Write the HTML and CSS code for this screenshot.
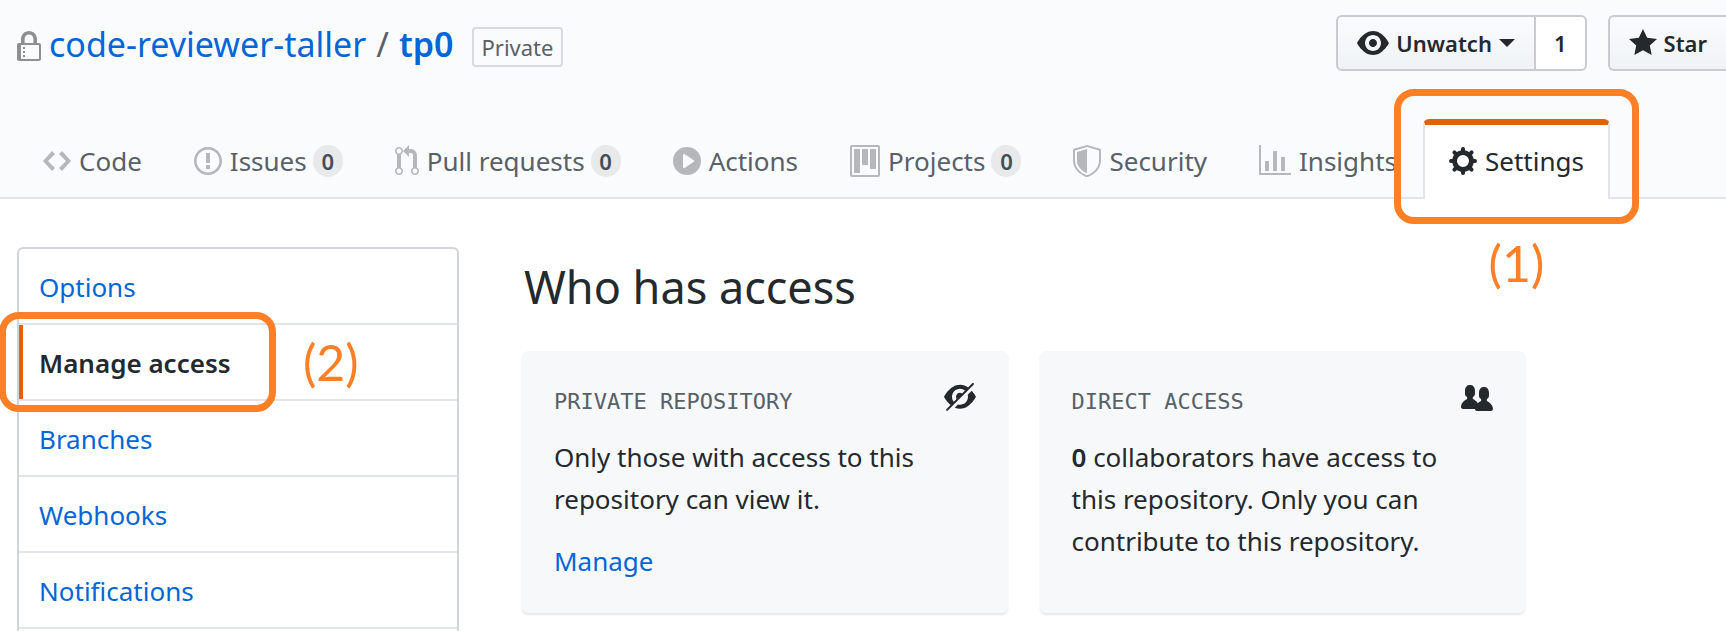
FILE: index.html
```html
<!DOCTYPE html>
<html lang="en">
<head>
<meta charset="utf-8">
<title>code-reviewer-taller/tp0 · Manage access</title>
<link rel="stylesheet" href="styles.css">
</head>
<body>
<header class="repo-header">
  <div class="repo-bar">
    <svg class="icon lock" width="24" height="32" viewBox="0 0 12 16" aria-hidden="true"><path fill-rule="evenodd" d="M4 13H3v-1h1v1zm8-6v7c0 .55-.45 1-1 1H1c-.55 0-1-.45-1-1V7c0-.55.45-1 1-1h1V4c0-2.2 1.8-4 4-4s4 1.8 4 4v2h1c.55 0 1 .45 1 1zM3.8 6h4.41V4c0-1.22-.98-2.2-2.2-2.2-1.22 0-2.2.98-2.2 2.2v2H3.8zM11 7H2v7h9V7zM4 8H3v1h1V8zm0 2H3v1h1v-1z"/></svg>
    <h1 class="repo-name"><a href="#">code-reviewer-taller</a><span class="slash">/</span><a class="repo" href="#">tp0</a></h1>
    <span class="label">Private</span>
    <div class="actions">
      <div class="btn-group">
        <button class="btn watch" type="button"><svg class="icon" width="32" height="32" viewBox="0 0 16 16" aria-hidden="true"><path fill-rule="evenodd" d="M8.06 2C3 2 0 8 0 8s3 6 8.06 6C13 14 16 8 16 8s-3-6-7.94-6zM8 12c-2.2 0-4-1.78-4-4 0-2.2 1.8-4 4-4 2.22 0 4 1.8 4 4 0 2.22-1.78 4-4 4zm2-4c0 1.11-.89 2-2 2-1.11 0-2-.89-2-2 0-1.11.89-2 2-2 1.11 0 2 .89 2 2z"/></svg>Unwatch<span class="caret"></span></button>
        <a class="count" href="#">1</a>
      </div>
      <button class="btn star" type="button"><svg class="icon" width="28" height="32" viewBox="0 0 14 16" aria-hidden="true"><path d="M14 6l-4.9-.64L7 1 4.9 5.36 0 6l3.6 3.26L2.67 14 7 11.67 11.33 14l-.93-4.74L14 6z"/></svg>Star</button>
    </div>
  </div>
  <nav class="tabs" aria-label="Repository">
    <a class="tab" href="#"><svg class="icon" width="28" height="32" viewBox="0 0 14 16" aria-hidden="true"><path d="M9.5 3L8 4.5 11.5 8 8 11.5 9.5 13 14 8 9.5 3zm-5 0L0 8l4.5 5L6 11.5 2.5 8 6 4.5 4.5 3z"/></svg>Code</a>
    <a class="tab" href="#"><svg class="icon" width="28" height="32" viewBox="0 0 14 16" aria-hidden="true"><path fill-rule="evenodd" d="M7 2.3c3.14 0 5.7 2.56 5.7 5.7s-2.56 5.7-5.7 5.7A5.71 5.71 0 011.3 8c0-3.14 2.56-5.7 5.7-5.7zM7 1C3.14 1 0 4.14 0 8s3.14 7 7 7 7-3.14 7-7-3.14-7-7-7zm1 3H6v5h2V4zm0 6H6v2h2v-2z"/></svg>Issues<span class="counter">0</span></a>
    <a class="tab" href="#"><svg class="icon" width="24" height="32" viewBox="0 0 12 16" aria-hidden="true"><path fill-rule="evenodd" d="M11 11.28V5c-.03-.78-.34-1.47-.94-2.06C9.46 2.35 8.78 2.03 8 2H7V0L4 3l3 3V4h1c.27.02.48.11.69.31.21.2.3.42.31.69v6.28A1.993 1.993 0 0010 15a1.993 1.993 0 001-3.72zm-1 2.92c-.66 0-1.2-.55-1.2-1.2 0-.65.55-1.2 1.2-1.2.65 0 1.2.55 1.2 1.2 0 .65-.55 1.2-1.2 1.2zM4 3c0-1.11-.89-2-2-2a1.993 1.993 0 00-1 3.72v6.56A1.993 1.993 0 002 15a1.993 1.993 0 001-3.72V4.72c.59-.34 1-.98 1-1.72zm-.8 10c0 .66-.55 1.2-1.2 1.2-.65 0-1.2-.55-1.2-1.2 0-.65.55-1.2 1.2-1.2.65 0 1.2.55 1.2 1.2zM2 4.2C1.34 4.2.8 3.65.8 3c0-.65.55-1.2 1.2-1.2.65 0 1.2.55 1.2 1.2 0 .65-.55 1.2-1.2 1.2z"/></svg>Pull requests<span class="counter">0</span></a>
    <a class="tab" href="#"><svg class="icon" width="28" height="32" viewBox="0 0 14 16" aria-hidden="true"><path fill-rule="evenodd" d="M14 8A7 7 0 110 8a7 7 0 0114 0zm-8.223 3.482l4.599-3.066a.5.5 0 000-.832L5.777 4.518A.5.5 0 005 4.934v6.132a.5.5 0 00.777.416z"/></svg>Actions</a>
    <a class="tab" href="#"><svg class="icon" width="30" height="32" viewBox="0 0 15 16" aria-hidden="true"><path fill-rule="evenodd" d="M10 12h3V2h-3v10zm-4-2h3V2H6v8zm-4 4h3V2H2v12zm-1 1h13V1H1v14zM14 0H1a1 1 0 00-1 1v14a1 1 0 001 1h13a1 1 0 001-1V1a1 1 0 00-1-1z"/></svg>Projects<span class="counter">0</span></a>
    <a class="tab" href="#"><svg class="icon" width="28" height="32" viewBox="0 0 14 16" aria-hidden="true"><path fill-rule="evenodd" d="M0 2l7-2 7 2v6.02C14 12.69 8.69 16 7 16c-1.69 0-7-3.31-7-7.98V2zm1 .75L7 1l6 1.75v5.268C13 12.104 8.449 15 7 15c-1.449 0-6-2.896-6-6.982V2.75zm1 .75L7 2v12c-1.207 0-5-2.482-5-5.985V3.5z"/></svg>Security</a>
    <a class="tab" href="#"><svg class="icon" width="32" height="32" viewBox="0 0 16 16" aria-hidden="true"><path d="M16 14v1H0V0h1v14h15zM5 13H3V8h2v5zm4 0H7V3h2v10zm4 0h-2V6h2v7z"/></svg>Insights</a>
    <a class="tab selected" href="#" aria-current="page"><svg class="icon" width="28" height="32" viewBox="0 0 14 16" aria-hidden="true"><g fill="none" stroke="currentColor"><circle cx="7" cy="8" r="4.2" stroke-width="2.4"/><path stroke-width="2" stroke-linecap="round" d="M7 3V2M7 13v1M2 8H1M12 8h1M3.5 4.5l-.8-.8M10.500 11.500l.8.8M3.500 11.500l-.8.8M10.500 4.500l.8-.8"/></g></svg>Settings<span class="mark mark-tab"></span><span class="step step-tab">(1)</span></a>
  </nav>
</header>
<main class="page">
  <nav class="menu" aria-label="Settings">
    <a class="menu-item" href="#">Options</a>
    <a class="menu-item current" href="#" aria-current="page">Manage access<span class="mark mark-menu"></span><span class="step step-menu">(2)</span></a>
    <a class="menu-item" href="#">Branches</a>
    <a class="menu-item" href="#">Webhooks</a>
    <a class="menu-item" href="#">Notifications</a>
  </nav>
  <section class="content">
    <h2 class="heading">Who has access</h2>
    <div class="cards">
      <article class="card">
        <div class="card-head">
          <h3 class="eyebrow">PRIVATE REPOSITORY</h3>
          <svg class="icon" width="32" height="28" viewBox="0 0 16 14" aria-hidden="true"><path fill-rule="evenodd" d="M14.822.854a.5.5 0 10-.707-.708l-2.11 2.11C10.89 1.483 9.565.926 8.06.926c-5.06 0-8.06 6-8.06 6s1.162 2.323 3.258 4.078l-2.064 2.065a.5.5 0 10.707.707L14.822.854zM4.86 9.403L6.292 7.97A1.999 1.999 0 016 6.925c0-1.11.89-2 2-2 .384 0 .741.106 1.045.292l1.433-1.433A3.98 3.98 0 008 2.925c-2.2 0-4 1.8-4 4 0 .938.321 1.798.859 2.478zm7.005-3.514l1.993-1.992A14.873 14.873 0 0116 6.925s-3 6-7.94 6a6.609 6.609 0 01-2.661-.57l1.565-1.566c.33.089.678.136 1.036.136 2.22 0 4-1.78 4-4 0-.358-.047-.705-.136-1.036zM9.338 8.415l.152-.151a1.996 1.996 0 01-.152.151z"/></svg>
        </div>
        <p class="text">Only those with access to this repository can view it.</p>
        <p class="text"><a href="#">Manage</a></p>
      </article>
      <article class="card">
        <div class="card-head">
          <h3 class="eyebrow">DIRECT ACCESS</h3>
          <svg class="icon" width="32" height="28" viewBox="0 0 16 14" aria-hidden="true"><path d="M16 12.999c0 .439-.45 1-1 1H7.995c-.539 0-.994-.447-.995-.999H1c-.54 0-1-.561-1-1 0-2.634 3-4 3-4s.229-.409 0-1c-.841-.621-1.058-.59-1-3 .058-2.419 1.367-3 2.5-3s2.442.58 2.5 3c.058 2.41-.159 2.379-1 3-.229.59 0 1 0 1s1.549.711 2.42 2.088C9.196 9.369 10 8.999 10 8.999s.229-.409 0-1c-.841-.62-1.058-.59-1-3 .058-2.419 1.367-3 2.5-3s2.437.581 2.495 3c.059 2.41-.158 2.38-1 3-.229.59 0 1 0 1s3.005 1.366 3.005 4z"/></svg>
        </div>
        <p class="text"><strong>0</strong> collaborators have access to this repository. Only you can contribute to this repository.</p>
      </article>
    </div>
  </section>
</main>
</body>
</html>
```
FILE: styles.css
```css
* { box-sizing: border-box; }

body {
  margin: 0;
  min-height: 100vh;
  display: flex;
  flex-direction: column;
  overflow-x: hidden;
  background: #fff;
  color: #24292e;
  font-family: "Noto Sans", "Open Sans", sans-serif;
  font-size: 26px;
  line-height: 42px;
}

h1, h2, h3, p { margin: 0; font-weight: 400; }
a { color: #0366d6; text-decoration: none; }
strong { font-weight: 600; }
.icon { flex: none; fill: currentColor; }

/* Repository header */
.repo-header {
  background: #fafbfc;
  border-bottom: 2px solid #e1e4e8;
}

.repo-bar {
  display: flex;
  align-items: flex-start;
  padding: 15px 0 0 17px;
}

.lock { margin: 16px 8px 0 0; color: #8d8f91; }

.repo-name {
  display: flex;
  font-size: 34px;
  line-height: 58px;
}

.slash { margin: 0 10px; color: #586069; }
.repo { font-weight: 600; }

.label {
  margin: 12px 0 0 18px;
  padding: 0 8px;
  border: 2px solid #d8dadd;
  border-radius: 4px;
  color: #586069;
  font-size: 22px;
  line-height: 36px;
}

.actions { display: flex; gap: 21px; margin-left: auto; }
.btn-group { display: flex; }

.btn, .count {
  display: flex;
  align-items: center;
  height: 56px;
  border: 2px solid #c9cbcf;
  color: #24292e;
  font: 600 22px "Noto Sans", "Open Sans", sans-serif;
}

.btn {
  gap: 7px;
  padding: 0 19px;
  border-radius: 6px;
  background: linear-gradient(#fafbfc, #eff3f6);
}

.watch { border-radius: 6px 0 0 6px; }

.caret {
  border: 8px solid transparent;
  border-top-color: currentColor;
  border-bottom-width: 0;
}

.count {
  padding: 0 18px;
  border-left: 0;
  border-radius: 0 6px 6px 0;
  background: #fff;
}

.star { border-right: 0; border-radius: 6px 0 0 6px; }

/* Tabs */
.tabs {
  display: flex;
  margin: 46px 0 -2px 17px;
}

.tab {
  position: relative;
  display: flex;
  flex: none;
  align-items: center;
  gap: 8px;
  height: 80px;
  padding: 0 24px 2px;
  border: 2px solid transparent;
  border-top: 6px solid transparent;
  border-bottom: 0;
  color: #586069;
}

.tab .icon { color: #b5b7ba; }

.counter {
  min-width: 30px;
  margin-left: -2px;
  border-radius: 16px;
  background: #e7e9eb;
  color: #444d56;
  font-size: 22px;
  font-weight: 600;
  line-height: 32px;
  text-align: center;
}

.selected {
  border-color: #e36209 #e1e4e8 transparent;
  border-radius: 6px 6px 0 0;
  background: #fff;
  color: #24292e;
}

.selected .icon { color: #24292e; }

/* Highlight frames and step numbers */
.mark {
  position: absolute;
  z-index: 1;
  border: 7px solid #ff7f27;
  border-radius: 20px;
}

.mark-tab { inset: -36px -31px -25px; }
.mark-menu { inset: -13px 181px -13px -20px; }

.step {
  position: absolute;
  color: #ff7f27;
  font: 400 50px/50px Lato, sans-serif;
}

.step-tab { top: 113px; left: 0; right: 0; text-align: center; }
.step-menu { top: 12px; left: 284px; }

/* Settings page */
.page {
  flex: 1;
  display: flex;
  gap: 63px;
  padding: 48px 17px 0;
}

.menu {
  flex: 0 0 442px;
  border: 2px solid #d1d5da;
  border-bottom: 0;
  border-radius: 6px 6px 0 0;
}

.menu-item {
  position: relative;
  display: block;
  padding: 17px 20px 15px;
  border-bottom: 2px solid #e1e4e8;
}

.current {
  color: #24292e;
  font-weight: 600;
}

.current::before {
  content: "";
  position: absolute;
  inset: 0 auto 0 0;
  width: 4px;
  background: #e36209;
}

.content { flex: 1; max-width: 1003px; }

.heading {
  padding: 4px 0 28px 2px;
  font-size: 45px;
  line-height: 72px;
}

.cards {
  display: grid;
  grid-template-columns: 1fr 1fr;
  gap: 32px;
}

.card {
  padding: 32px 32px 31px;
  border-radius: 6px;
  background: #f6f8fa;
  box-shadow: 0 2px 2px rgba(27, 31, 35, 0.1);
}

.card-head {
  display: flex;
  justify-content: space-between;
  margin-bottom: 15px;
}

.eyebrow {
  color: #586069;
  font: 22px/38px "DejaVu Sans Mono", monospace;
}

.text { padding-right: 20px; }
.text + .text { margin-top: 20px; }
```
